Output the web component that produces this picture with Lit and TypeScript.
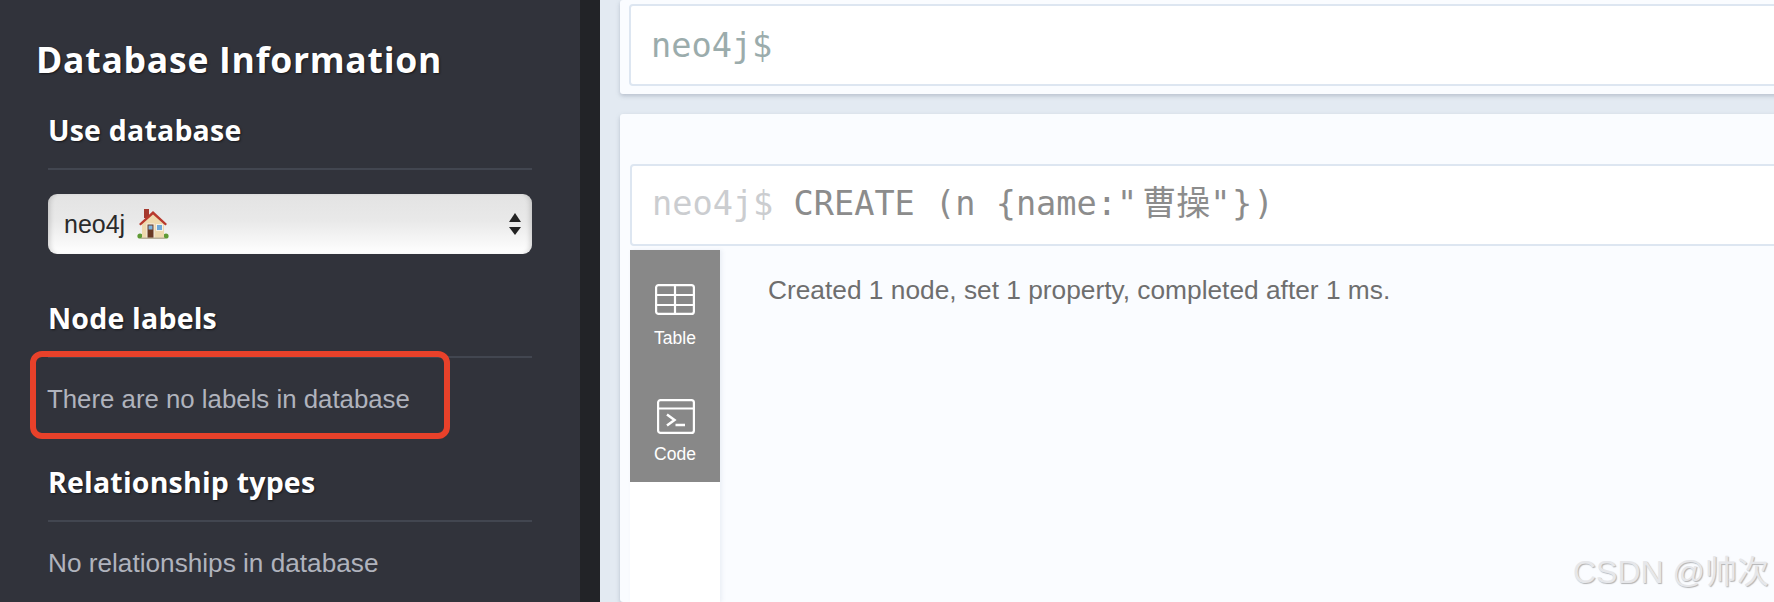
import { LitElement, html, css } from "lit";
import { customElement } from "lit/decorators.js";

@customElement("app-root")
export class AppRoot extends LitElement {
  static styles = css`
    :host { display: block; width: 1774px; height: 602px; overflow: hidden; position: relative; font-family: "Liberation Sans", Arial, sans-serif; background: #e3eaf2; }
    .page { display: flex; height: 602px; }
    .sidebar { width: 580px; flex: none; background: #31333b; padding: 38px 48px 0 48px; box-sizing: border-box; height: 602px; overflow: hidden; }
    .strip { width: 20px; flex: none; background: #222327; }
    h1 { margin: 0 0 0 -12px; font: 700 35.5px/42px "Open Sans", sans-serif; color: #fff; letter-spacing: .75px; text-shadow: 1px 1px 2px rgba(0,0,0,.55); white-space: nowrap; }
    h2 { margin: 0; font: 700 28.5px/36px "Open Sans", sans-serif; color: #fff; letter-spacing: .2px; text-shadow: 1px 1px 2px rgba(0,0,0,.55); white-space: nowrap; padding-bottom: 20px; border-bottom: 2px solid #424650; }
    h2.first { margin-top: 32px; }
    .select { margin-top: 24px; height: 60px; border-radius: 9px; display: flex; align-items: center; padding-left: 16px; padding-right: 11px; gap: 12px; color: #2a2a2a; font-size: 25px; background: linear-gradient(#e3e3e3 0%, #e9e9e9 45%, #ffffff 100%); box-shadow: inset 5px 0 5px -3px rgba(0,0,0,.16), inset -5px 0 5px -3px rgba(0,0,0,.16); }
    .select .grow { flex: 1; }
    .select svg { display: block; flex: none; }
    .nl { margin-top: 46px; }
    .msg { font-size: 26px; line-height: 30px; color: #b0b3bd; white-space: nowrap; }
    .m1 { margin-top: 26px; margin-left: -1px; font-size: 25.8px; }
    .rl { margin-top: 50px; }
    .m2 { margin-top: 26px; font-size: 26.2px; }
    .main { flex: 1; min-width: 0; overflow: hidden; padding-left: 20px; box-sizing: border-box; }
    .card { width: 1200px; background: #fafcff; box-shadow: 0 2px 4px rgba(120,130,150,.4); border-radius: 3px; box-sizing: border-box; }
    .c1 { height: 94px; padding: 4px 0 0 9px; margin-bottom: 20px; }
    .c2 { height: 488px; padding: 50px 0 0 10px; }
    .editor { height: 82px; box-sizing: border-box; border: 2px solid #dde6f1; border-radius: 4px; background: #fff; display: flex; align-items: center; padding-left: 20px; font: 33.6px "DejaVu Sans Mono", "Noto Sans CJK SC", monospace; white-space: pre; }
    .c2 .editor { padding-bottom: 4px; }
    .c1 .prompt { color: #9bacac; }
    .c2 .prompt { color: #cbcdd0; }
    .code { color: #8c8c8c; }
    .cjk { font: 34px/1 "Noto Sans CJK SC", sans-serif; margin-left: 5px; }
    .tail { letter-spacing: 1.5px; }
    .result { display: flex; margin-top: 4px; }
    .tabs { width: 90px; height: 352px; flex: none; background: #fff; box-shadow: 2px 0 4px rgba(120,140,170,.12); }
    .tabs-in { height: 232px; background: #888; color: #fff; font-size: 17.5px; box-sizing: border-box; padding-top: 34px; display: flex; flex-direction: column; align-items: center; }
    .tabs-in svg { display: block; }
    .lab { line-height: 22px; }
    .t { margin-top: 12px; }
    .gap { margin-top: 50px; margin-left: 1px; }
    .c { margin-top: 9px; }
    .out { padding: 25px 0 0 48px; font-size: 26.3px; line-height: 30px; color: #6e6e6e; white-space: nowrap; }
    .mark { position: absolute; left: 1573px; top: 553px; font-size: 32px; line-height: 38px; color: #e6e7ea; white-space: nowrap; text-shadow: 1px 1px 1px rgba(120,120,120,.55); font-family: "Liberation Sans", "Noto Sans CJK SC", sans-serif; }
    .redbox { position: absolute; left: 30px; top: 351px; width: 420px; height: 88px; box-sizing: border-box; border: 6px solid #e8412a; border-radius: 12px; }
  `;

  render() {
    return html`
      <div class="page">
        <aside class="sidebar">
          <h1>Database Information</h1>
          <h2 class="first">Use database</h2>
          <div class="select">
            <span>neo4j</span>
            <svg width="32" height="32" viewBox="0 0 32 32">
              <rect x="7" y="1" width="5" height="9" fill="#a5392e"/>
              <circle cx="3" cy="28" r="2.6" fill="#5f9a35"/>
              <circle cx="29" cy="28" r="2.6" fill="#5f9a35"/>
              <path d="M5 15 16 5l11 10v15H5z" fill="#eed9ae"/>
              <path d="M2 16 16 3l14 13-1.6 1.6L16 6.6 3.6 17.6z" fill="#b8392d"/>
              <rect x="9.5" y="15.500" width="8" height="15" fill="#f4f0e6"/>
              <rect x="10.500" y="16.500" width="6" height="14" fill="#6b3a24"/>
              <rect x="11.500" y="17.500" width="4" height="4" fill="#7cb2dc"/>
              <rect x="19" y="16" width="7" height="7" fill="#f4f0e6"/>
              <rect x="20" y="17" width="5" height="5" fill="#6fa9d8"/>
              <rect x="4" y="29.500" width="24" height="1.500" fill="#b9b29c"/>
            </svg>
            <span class="grow"></span>
            <svg width="12" height="22" viewBox="0 0 12 22">
              <path d="M6 0 12 9H0z" fill="#222"/>
              <path d="M0 14H12L6 22z" fill="#222"/>
            </svg>
          </div>
          <h2 class="nl">Node labels</h2>
          <div class="msg m1">There are no labels in database</div>
          <h2 class="rl">Relationship types</h2>
          <div class="msg m2">No relationships in database</div>
        </aside>
        <div class="strip"></div>
        <main class="main">
          <section class="card c1">
            <div class="editor"><span class="prompt">neo4j$</span></div>
          </section>
          <section class="card c2">
            <div class="editor"><div><span class="prompt">neo4j$</span><span class="code"> CREATE (n {name:"<span class="cjk">曹操</span><span class="tail">"})</span></span></div></div>
            <div class="result">
              <div class="tabs">
                <div class="tabs-in">
                  <svg width="40" height="31" viewBox="0 0 40 31" fill="none" stroke="#fff" stroke-width="2.2">
                    <rect x="1.100" y="1.100" width="37.800" height="28.800" rx="2.500"/>
                    <path d="M1 11H39M1 21H39M20 1V30"/>
                  </svg>
                  <div class="lab t">Table</div>
                  <svg class="gap" width="38" height="35" viewBox="0 0 38 35" fill="none" stroke="#fff" stroke-width="2.2">
                    <rect x="1.100" y="1.100" width="35.800" height="32.800" rx="2.500"/>
                    <path d="M1 9.500H37"/>
                    <path stroke-width="2.500" d="M10 15.500l7.500 5.500-7.500 5.500M18.500 26H28"/>
                  </svg>
                  <div class="lab c">Code</div>
                </div>
              </div>
              <div class="out">Created 1 node, set 1 property, completed after 1 ms.</div>
            </div>
          </section>
        </main>
      </div>
      <div class="redbox"></div>
      <div class="mark">CSDN @帅次</div>
    `;
  }
}
